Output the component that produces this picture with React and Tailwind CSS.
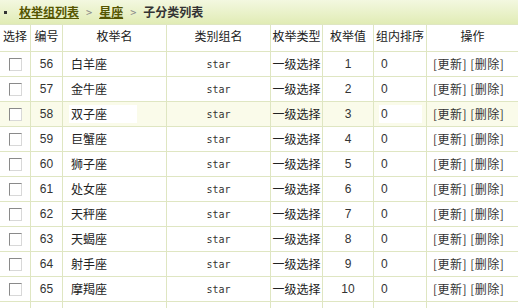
import React from 'react';

const rows = [
  { id: 56, name: '白羊座', val: 1 },
  { id: 57, name: '金牛座', val: 2 },
  { id: 58, name: '双子座', val: 3, hover: true },
  { id: 59, name: '巨蟹座', val: 4 },
  { id: 60, name: '狮子座', val: 5 },
  { id: 61, name: '处女座', val: 6 },
  { id: 62, name: '天秤座', val: 7 },
  { id: 63, name: '天蝎座', val: 8 },
  { id: 64, name: '射手座', val: 9 },
  { id: 65, name: '摩羯座', val: 10 },
];

const cjk = "font-['SimSun','Noto_Sans_CJK_SC',sans-serif]";
const cell = 'border border-[#dfe6c2]';

const Checkbox = () => (
  <div className="ml-[9px] w-[13px] h-[13px] border border-t-[#8a8a8a] border-l-[#8a8a8a] border-r-[#d8d8d8] border-b-[#d8d8d8] bg-white" />
);

export default function App() {
  return (
    <div className={`w-[518px] h-[308px] overflow-hidden bg-white text-[12px] text-[#222] ${cjk}`}>
      {/* 面包屑 */}
      <div className="h-[24px] flex items-center pl-[4px] bg-gradient-to-b from-[#f3f8e0] to-[#e1ecb5]">
        <span className="w-[3px] h-[3px] bg-[#333] mr-[12px]" />
        <a className="font-bold underline text-[#555500]">枚举组列表</a>
        <span className="text-[#888] mx-[7px] text-[11px]">&gt;</span>
        <a className="font-bold underline text-[#555500]">星座</a>
        <span className="text-[#888] mx-[7px] text-[11px]">&gt;</span>
        <span className="font-bold text-[#333]">子分类列表</span>
      </div>

      <table className="border-collapse table-fixed w-[519px] -ml-px">
        <colgroup>
          <col className="w-[31px]" />
          <col className="w-[32px]" />
          <col className="w-[104px]" />
          <col className="w-[104px]" />
          <col className="w-[52px]" />
          <col className="w-[51px]" />
          <col className="w-[53px]" />
          <col className="w-[92px]" />
        </colgroup>
        <thead>
          <tr className="h-[27px] text-[#222]">
            {['选择', '编号', '枚举名', '类别组名', '枚举类型', '枚举值', '组内排序', '操作'].map((h) => (
              <th key={h} className={`${cell} font-normal text-center px-0 pb-[4px] whitespace-nowrap`}>
                {h}
              </th>
            ))}
          </tr>
        </thead>
        <tbody>
          {rows.map((r) => (
            <tr key={r.id} className={`h-[25px] ${r.hover ? 'bg-[#fafbea]' : ''}`}>
              <td className={cell}>
                <Checkbox />
              </td>
              <td className={`${cell} text-center font-['Liberation_Sans',sans-serif] text-[12px] text-[#333]`}>
                {r.id}
              </td>
              <td className={`${cell} pl-[6px]`}>
                <span className={`inline-block pl-[2px] pr-[30px] ${r.hover ? 'bg-white' : ''}`}>{r.name}</span>
              </td>
              <td className={`${cell} text-center font-['DejaVu_Sans_Mono',monospace] text-[10px] text-[#333]`}>
                star
              </td>
              <td className={`${cell} text-center whitespace-nowrap`}>一级选择</td>
              <td className={`${cell} text-center font-['Liberation_Sans',sans-serif] text-[#333]`}>
                {r.val}
              </td>
              <td className={`${cell} pl-[5px] font-['Liberation_Sans',sans-serif] text-[#333]`}>
                <span className={`inline-block pl-[2px] pr-[34px] ${r.hover ? 'bg-white' : ''}`}>0</span>
              </td>
              <td className={`${cell} pl-[6px] whitespace-nowrap text-[#333] tracking-[0.5px]`}>[更新] [删除]</td>
            </tr>
          ))}
          <tr className="h-[25px]">
            {[0, 1, 2, 3, 4, 5, 6, 7].map((i) => (
              <td key={i} className={cell} />
            ))}
          </tr>
        </tbody>
      </table>
    </div>
  );
}
